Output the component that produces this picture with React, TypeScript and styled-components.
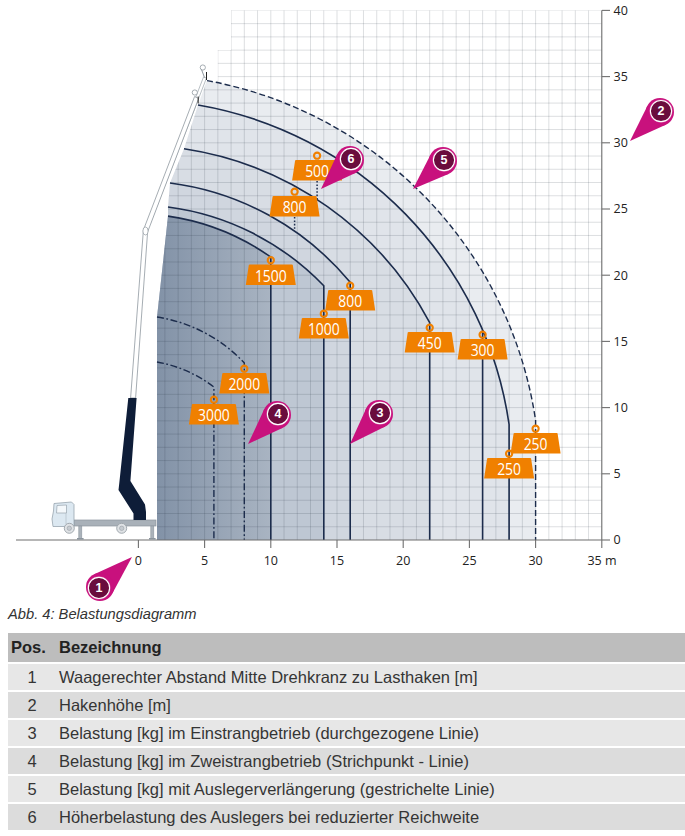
import React from "react";
import styled, { createGlobalStyle } from "styled-components";

const Global = createGlobalStyle`
  html, body { margin: 0; padding: 0; background: #ffffff; }
  body { font-family: "Liberation Sans", Arial, sans-serif; color: #333; }
`;

const Page = styled.div`
  width: 685px;
  display: flex;
  flex-direction: column;
`;

const Chart = styled.svg`
  display: block;
  width: 685px;
  height: 606px;
`;

const Lower = styled.div`
  display: flex;
  flex-direction: column;
  padding-left: 8px;
`;

const Caption = styled.p`
  margin: 0;
  font-family: "Liberation Sans", Arial, sans-serif;
  font-style: italic;
  font-size: 14.7px;
  line-height: 17px;
  color: #333;
`;

const Table = styled.div`
  margin-top: 10px;
  display: flex;
  flex-direction: column;
  font-family: "Liberation Sans", Arial, sans-serif;
  font-size: 16.5px;
`;

const HeadRow = styled.div`
  display: grid;
  grid-template-columns: 51px 1fr;
  height: 29px;
  align-items: center;
  background: #bdbdbd;
  font-weight: bold;
  color: #222;
`;

const Row = styled.div<{ $dark: boolean }>`
  display: grid;
  grid-template-columns: 51px 1fr;
  height: 26px;
  align-items: center;
  border-top: 2px solid #ffffff;
  background: ${(p) => (p.$dark ? "#dcdcdc" : "#e7e7e7")};
  color: #353535;
`;

const HeadPos = styled.span`
  padding-left: 3px;
`;

const Pos = styled.span`
  text-align: center;
  padding-right: 3px;
`;

const Text = styled.span`
  white-space: nowrap;
`;

const X = (m: number) => 138.4 + 13.24 * m;
const Y = (m: number) => 540 - 13.24 * m;

const NAVY = "#1c2c4c";
const ORANGE = "#f08000";

const leftEdge: [number, number][] = [
  [157, 540],
  [157, 317],
  [160, 290],
  [168, 216],
  [168, 207],
  [170, 183],
  [184, 148.8],
  [198, 105],
  [207, 80.6],
];

const edgeTo = (n: number) =>
  leftEdge
    .slice(0, n)
    .map((p, i) => `${i === 0 ? "M" : "L"}${p[0]},${p[1]}`)
    .join(" ");

const regions = [
  { d: `${edgeTo(9)} A406 406 0 0 1 535.6,420.4 L535.6,540 Z`, a: 0.1 },
  { d: `${edgeTo(8)} A379 379 0 0 1 509.1,424.5 L509.1,540 Z`, a: 0.045 },
  { d: `${edgeTo(7)} A335 335 0 0 1 429.7,322.6 L429.7,540 Z`, a: 0.045 },
  { d: `${edgeTo(6)} A280.9 280.9 0 0 1 350.2,282.3 L350.2,540 Z`, a: 0.045 },
  { d: `${edgeTo(5)} A262.8 262.8 0 0 1 323.8,285.8 L323.8,540 Z`, a: 0.1 },
];

const darkRegion = `${edgeTo(4)} A237 237 0 0 1 270.8,257.1 L270.8,540 Z`;

const weights = [
  { cx: 317.1, top: 160, t: "500" },
  { cx: 294.6, top: 196, t: "800" },
  { cx: 270.8, top: 264.5, t: "1500" },
  { cx: 350.2, top: 290, t: "800" },
  { cx: 323.8, top: 318, t: "1000" },
  { cx: 429.7, top: 332, t: "450" },
  { cx: 482.6, top: 339, t: "300" },
  { cx: 535.6, top: 433, t: "250" },
  { cx: 509.1, top: 458, t: "250" },
  { cx: 244.3, top: 373, t: "2000" },
  { cx: 213.9, top: 404, t: "3000" },
];

const badges = [
  { n: "1", c: [100, 587], tip: [132, 557] },
  { n: "2", c: [660, 112], tip: [630, 141] },
  { n: "3", c: [379, 414], tip: [350, 444] },
  { n: "4", c: [277, 415], tip: [248, 444] },
  { n: "5", c: [443, 161], tip: [413, 189] },
  { n: "6", c: [350, 160], tip: [321, 189] },
];

function Weight({ cx, top, t }: { cx: number; top: number; t: string }) {
  return (
    <g>
      <circle cx={cx} cy={top - 4.3} r={3.1} fill="none" stroke={ORANGE} strokeWidth={2.1} />
      <path
        d={`M${cx - 22},${top + 0.6} Q${cx - 22},${top} ${cx - 21},${top} L${cx + 21},${top} Q${cx + 22},${top} ${cx + 22},${top + 0.6} L${cx + 25},${top + 20.5} L${cx - 25},${top + 20.5} Z`}
        fill={ORANGE}
      />
      <text
        x={cx}
        y={top + 17.2}
        textAnchor="middle"
        fontFamily="'Open Sans', 'Noto Sans', sans-serif"
        fontSize={16}
        fontWeight={500}
        fill="#ffffff"
        textLength={t.length * 7.95}
        lengthAdjust="spacingAndGlyphs"
      >
        {t}
      </text>
    </g>
  );
}

function Badge({ n, c, tip }: { n: string; c: number[]; tip: number[] }) {
  const [cx, cy] = c;
  const [tx, ty] = tip;
  const r = 14;
  const dx = cx - tx;
  const dy = cy - ty;
  const L = Math.hypot(dx, dy);
  const px = -dy / L;
  const py = dx / L;
  const ux = dx / L;
  const uy = dy / L;
  const sh = (r * r) / L;
  const hr = Math.sqrt(r * r - sh * sh);
  const bx = cx - ux * sh;
  const by = cy - uy * sh;
  const ix = cx + ux * 1.4;
  const iy = cy + uy * 1.4;
  return (
    <g>
      <path
        d={`M${tx},${ty} L${bx + px * hr},${by + py * hr} L${bx - px * hr},${by - py * hr} Z`}
        fill="#c8117d"
      />
      <circle cx={cx} cy={cy} r={r} fill="#c8117d" />
      <circle cx={ix} cy={iy} r={11.6} fill="#d2489a" />
      <circle cx={ix} cy={iy} r={10.6} fill="#6a0c3d" stroke="#ffffff" strokeWidth={1.1} />
      <text
        x={ix}
        y={iy + 4.4}
        textAnchor="middle"
        fontFamily="'Liberation Sans', Arial, sans-serif"
        fontWeight="bold"
        fontSize={12.5}
        fill="#ffffff"
      >
        {n}
      </text>
    </g>
  );
}

function Diagram() {
  const vLines = Array.from({ length: 35 }, (_, i) => X(i + 1));
  const hLines = Array.from({ length: 40 }, (_, j) => Y(j + 1));
  const ticks = [0, 5, 10, 15, 20, 25, 30, 35, 40];
  const xt = [0, 5, 10, 15, 20, 25, 30];
  return (
    <Chart viewBox="0 0 685 606">
      <defs>
        <clipPath id="gridClip">
          <polygon points="231,10.4 601.8,10.4 601.8,540 157,540 157,317 160,290 168,216 168,207 170,183 184,148.8 198,105 207,80.6 217.8,80.6 217.8,50.1 231,50.1" />
        </clipPath>
        <linearGradient id="darkGrad" x1="157" y1="0" x2="271" y2="0" gradientUnits="userSpaceOnUse">
          <stop offset="0" stopColor="#8292a7" />
          <stop offset="1" stopColor="#a9b4c2" />
        </linearGradient>
      </defs>

      {regions.map((r, i) => (
        <path key={i} d={r.d} fill={`rgba(40,70,105,${r.a})`} />
      ))}
      <path d={darkRegion} fill="url(#darkGrad)" />

      <g clipPath="url(#gridClip)" stroke="rgba(30,40,55,0.15)" strokeWidth={1}>
        {vLines.map((x) => (
          <line key={`v${x}`} x1={x} y1={0} x2={x} y2={540} />
        ))}
        {hLines.map((y) => (
          <line key={`h${y}`} x1={150} y1={y} x2={602} y2={y} />
        ))}
      </g>

      {/* load curves */}
      <g fill="none" stroke={NAVY} strokeWidth={1.6}>
        <path d="M207,80.6 A406 406 0 0 1 535.6,420.4 L535.6,540" strokeDasharray="6 3" strokeWidth={1.4} />
        <path d="M198,105 A379 379 0 0 1 509.1,424.5 L509.1,540" />
        <path d="M482.6,330 L482.6,540" />
        <path d="M184,148.8 A335 335 0 0 1 429.7,322.6 L429.7,540" />
        <path d="M170,183 A280.9 280.9 0 0 1 350.2,282.3 L350.2,540" />
        <path d="M168,207 A262.8 262.8 0 0 1 323.8,285.8 L323.8,540" />
        <path d="M168,216.1 A237 237 0 0 1 270.8,257.1 L270.8,540" />
        <path d="M157,317 A151.3 151.3 0 0 1 244.3,362.9 L244.3,540" strokeDasharray="7 2.5 1.8 2.5" strokeWidth={1.4} />
        <path d="M157,362 A131.6 131.6 0 0 1 213.9,387 L213.9,540" strokeDasharray="7 2.5 1.8 2.5" strokeWidth={1.4} />
        <path d="M317.1,181 L317.1,199.5" strokeDasharray="1.6 1.8" strokeWidth={1.5} />
        <path d="M294.6,217 L294.6,230.5" strokeDasharray="1.6 1.8" strokeWidth={1.5} />
      </g>

      {/* axes */}
      <g stroke="#6f6f6f" strokeWidth={1.1}>
        <line x1={16} y1={540} x2={601.8} y2={540} />
        <line x1={601.8} y1={10.4} x2={601.8} y2={540} />
        {ticks.map((m) => (
          <line key={`rt${m}`} x1={601.8} y1={Y(m)} x2={610} y2={Y(m)} />
        ))}
        {[0, 5, 10, 15, 20, 25, 30, 35].map((m) => (
          <line key={`bt${m}`} x1={X(m)} y1={540} x2={X(m)} y2={548} />
        ))}
      </g>
      <g fontFamily="'Open Sans', 'Noto Sans', sans-serif" fontSize={12.5} fill="#222">
        {ticks.map((m) => (
          <text key={`rl${m}`} x={613.5} y={Y(m) + 4.4}>
            {m}
          </text>
        ))}
        {xt.map((m) => (
          <text key={`bl${m}`} x={X(m)} y={564.5} textAnchor="middle">
            {m}
          </text>
        ))}
        <text x={602} y={564.5} textAnchor="middle">
          35 m
        </text>
      </g>

      {/* truck */}
      <g>
        <rect x={74} y={520} width={82} height={6} fill="#a9b1b9" stroke="#8c959e" strokeWidth={0.7} />
        <path d="M54,503.5 L71.5,502 L74,504.5 L74,526.5 L53,526.5 L52,519 L53.5,511 Z" fill="#dce8f1" stroke="#98a4ae" strokeWidth={0.8} />
        <path d="M57,505.5 L66.5,505 L66.5,513 L56.5,513 Z" fill="#f4f8fb" stroke="#98a4ae" strokeWidth={0.7} />
        <line x1={66} y1={513} x2={66} y2={524} stroke="#b3bdc6" strokeWidth={0.7} />
        <circle cx={69.3} cy={528.3} r={5} fill="#dfe2e5" stroke="#9aa1a8" strokeWidth={0.9} />
        <circle cx={69.3} cy={528.3} r={2.2} fill="#c6cbd0" stroke="#9aa1a8" strokeWidth={0.6} />
        <circle cx={121.7} cy={528.3} r={5} fill="#dfe2e5" stroke="#9aa1a8" strokeWidth={0.9} />
        <circle cx={121.7} cy={528.3} r={2.2} fill="#c6cbd0" stroke="#9aa1a8" strokeWidth={0.6} />
        <rect x={78.8} y={526} width={3} height={12.5} fill="#aab2ba" stroke="#8c959e" strokeWidth={0.6} />
        <rect x={77} y={538} width={6.6} height={1.6} fill="#8c959e" />
        <rect x={150.8} y={526} width={3} height={12.5} fill="#aab2ba" stroke="#8c959e" strokeWidth={0.6} />
        <rect x={149} y={538} width={6.6} height={1.6} fill="#8c959e" />
      </g>

      {/* boom */}
      <g>
        <path d="M203.5,77 L206.5,78 L150.5,223 L147.8,222 Z" fill="#ffffff" stroke="#9aa3ab" strokeWidth={0.7} />
        <path d="M130.6,398 L135.6,398 L147.6,232 L198.6,98.5 L194.6,96.5 L143.4,230 Z" fill="#ffffff" stroke="#8f989f" strokeWidth={0.8} />
        <ellipse cx={145.5} cy={231} rx={2.6} ry={4} fill="#ffffff" stroke="#8f989f" strokeWidth={0.7} />
        <circle cx={202.8} cy={67.5} r={2.6} fill="#ffffff" stroke="#8f989f" strokeWidth={0.8} />
        <path d="M201.5,69.5 L204.5,77.5" stroke="#8f989f" strokeWidth={1} />
        <path d="M206.5,72 L206.5,80" stroke="#222" strokeWidth={1} />
        <circle cx={194.8} cy={92.5} r={2.6} fill="#ffffff" stroke="#8f989f" strokeWidth={0.8} />
        <path d="M198.2,96.5 L198.2,103.5" stroke="#222" strokeWidth={1} />
        <path d="M128.3,398 L136.6,398 L130.4,481 L145,504.5 L146,512 L146,520 L133.5,520 L133.5,513.5 L118.5,490 L119.3,483 Z" fill="#0e1d38" />
      </g>

      {weights.map((w, i) => (
        <Weight key={i} {...w} />
      ))}
      {badges.map((b) => (
        <Badge key={b.n} {...b} />
      ))}
    </Chart>
  );
}

const rows = [
  "Waagerechter Abstand Mitte Drehkranz zu Lasthaken [m]",
  "Hakenhöhe [m]",
  "Belastung [kg] im Einstrangbetrieb (durchgezogene Linie)",
  "Belastung [kg] im Zweistrangbetrieb (Strichpunkt - Linie)",
  "Belastung [kg] mit Auslegerverlängerung (gestrichelte Linie)",
  "Höherbelastung des Auslegers bei reduzierter Reichweite",
];

export default function App() {
  return (
    <Page>
      <Global />
      <Diagram />
      <Lower>
        <Caption>Abb. 4: Belastungsdiagramm</Caption>
        <Table>
          <HeadRow>
            <HeadPos>Pos.</HeadPos>
            <Text>Bezeichnung</Text>
          </HeadRow>
          {rows.map((r, i) => (
            <Row key={i} $dark={i % 2 === 1}>
              <Pos>{i + 1}</Pos>
              <Text>{r}</Text>
            </Row>
          ))}
        </Table>
      </Lower>
    </Page>
  );
}
